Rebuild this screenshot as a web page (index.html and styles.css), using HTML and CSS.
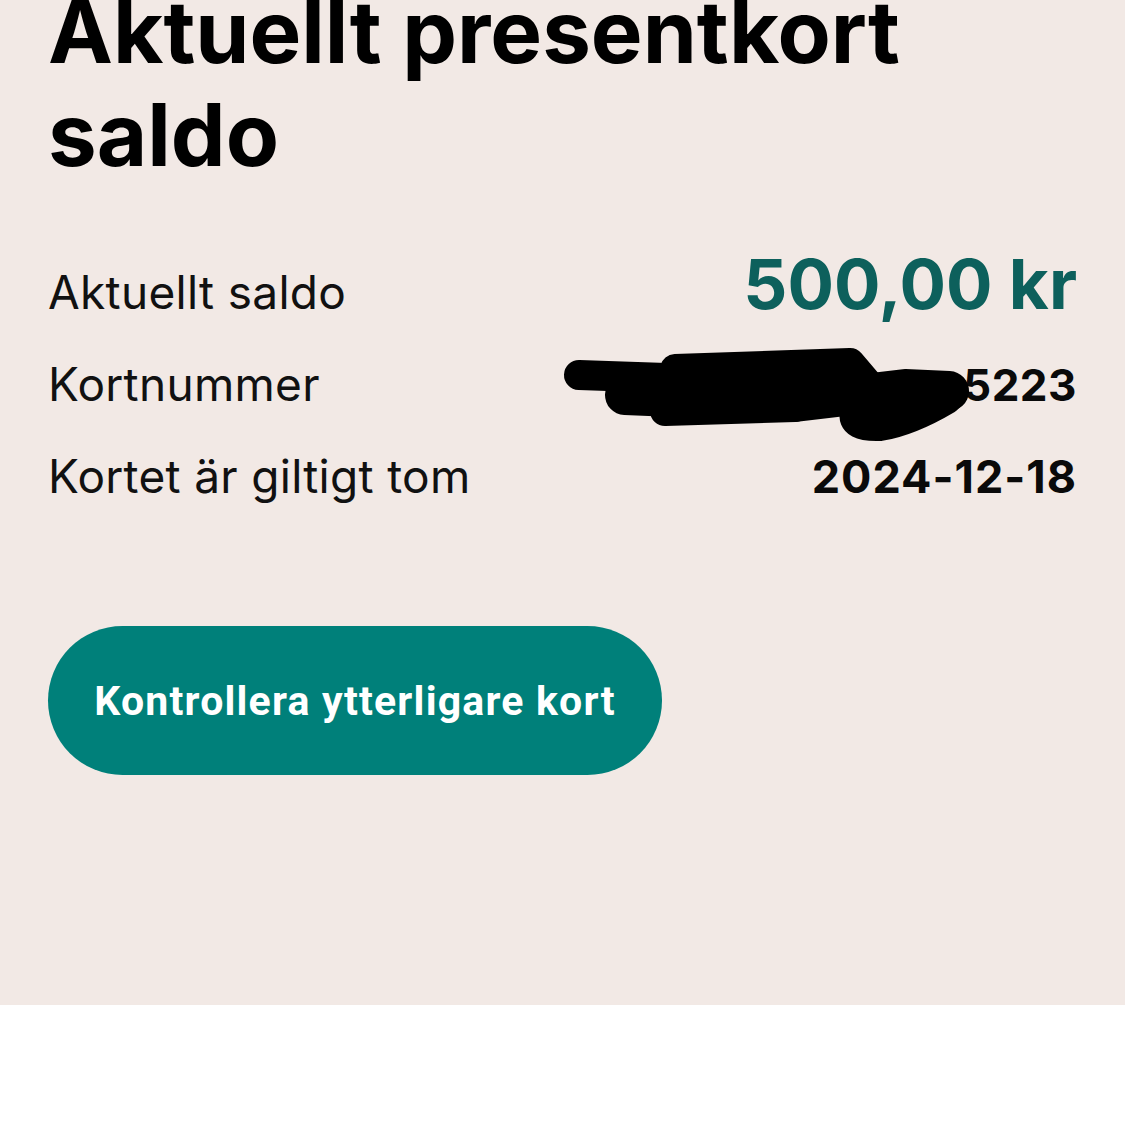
FILE: index.html
```html
<!DOCTYPE html>
<html lang="sv">
<head>
<meta charset="utf-8">
<title>Aktuellt presentkort saldo</title>
<link rel="stylesheet" href="styles.css">
</head>
<body>
<section class="balance">
  <h1 class="title">Aktuellt presentkort saldo</h1>
  <div class="rows">
    <div class="row">
      <span class="label">Aktuellt saldo</span>
      <span class="value value-amount">500,00 kr</span>
    </div>
    <div class="row">
      <span class="label">Kortnummer</span>
      <span class="value value-card">5223<svg class="redact" viewBox="0 0 420 110" width="420" height="110" aria-hidden="true">
          <g fill="#000" stroke="#000" stroke-linecap="round" stroke-linejoin="round">
            <path d="M34 30 L150 34" stroke-width="30" fill="none"/>
            <path d="M130 24 L305 18 L322 38 L250 62 L120 66 Z" stroke-width="30"/>
            <path d="M80 50 L250 57 L360 44 L404 46" stroke-width="40" fill="none"/>
            <path d="M402 54 Q365 76 335 81 Q306 82 310 68 L336 60" stroke-width="30" fill="none"/>
          </g>
        </svg></span>
    </div>
    <div class="row">
      <span class="label">Kortet är giltigt tom</span>
      <span class="value value-date">2024-12-18</span>
    </div>
  </div>
  <button class="btn" type="button">Kontrollera ytterligare kort</button>
</section>
</body>
</html>
```

FILE: styles.css
```css
html, body {
  margin: 0;
  padding: 0;
  background: #ffffff;
}

body {
  font-family: "Inter", "Noto Sans", "Liberation Sans", sans-serif;
  color: #0a0a0a;
}

.balance {
  background: #f2e9e5;
  padding: 0 48px 230px 48px;
  height: 1005px;
  box-sizing: border-box;
  overflow: hidden;
}

.title {
  margin: -20px 0 0 0;
  font-size: 87px;
  font-weight: 700;
  line-height: 103px;
  letter-spacing: 0;
  color: #000;
}

.rows {
  margin-top: 60px;
  display: flex;
  flex-direction: column;
}

.row {
  display: flex;
  justify-content: space-between;
  align-items: baseline;
  height: 92px;
}

.label {
  font-size: 46px;
  font-weight: 400;
  line-height: 92px;
  letter-spacing: 0.3px;
  color: #111;
}

.value {
  font-size: 44px;
  font-weight: 700;
  line-height: 60px;
  color: #0a0a0a;
}

.value-amount {
  font-size: 69px;
  color: #0d605c;
}

.value-date {
  font-size: 45px;
  letter-spacing: 1px;
}

.value-card {
  position: relative;
  letter-spacing: 0.5px;
}

.redact {
  position: absolute;
  right: 112px;
  top: -10px;
  overflow: visible;
}

.btn {
  margin-top: 104px;
  width: 614px;
  height: 149px;
  border: none;
  border-radius: 75px;
  background: #00807a;
  color: #ffffff;
  font-family: "Roboto", "Liberation Sans", sans-serif;
  font-weight: 700;
  font-size: 41px;
  letter-spacing: 1.2px;
  padding: 0;
  cursor: pointer;
}
```
